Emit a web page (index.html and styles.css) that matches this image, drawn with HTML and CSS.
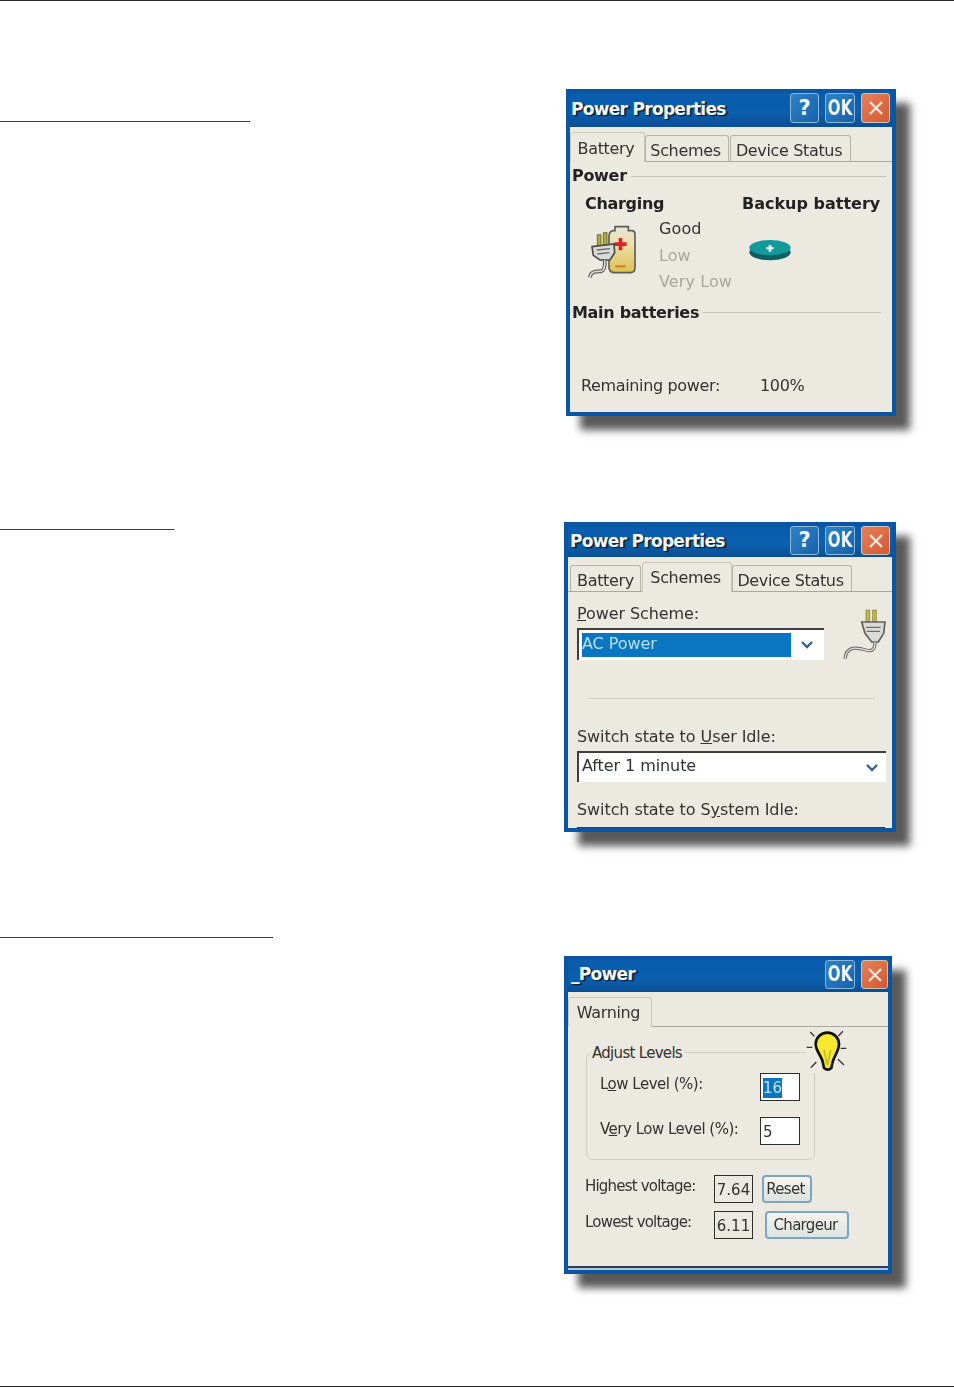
FILE: index.html
```html
<!DOCTYPE html>
<html lang="en">
<head>
<meta charset="utf-8">
<title>Power Properties</title>
<link rel="stylesheet" href="styles.css">
</head>
<body>
<div class="page">
  <section class="section s1">
    <div class="rule r1"></div>
    <div class="dialog d1">
      <div class="titlebar tall">
        <span class="title">Power Properties</span>
        <span class="btn">?</span><span class="btn wide"><span class="ok">OK</span></span><span class="btn close"><svg viewBox="0 0 20 20" width="20" height="20"><path d="M4 4L16 16M16 4L4 16" stroke="#f6e4da" stroke-width="2.4" fill="none"/></svg></span>
      </div>
      <div class="tabs tabs1">
        <span class="tab active t-battery">Battery</span>
        <span class="tab t-schemes">Schemes</span>
        <span class="tab t-device">Device Status</span>
      </div>
      <div class="panel p1">
        <div class="heading h-power">Power</div>
        <div class="charging">
          <div class="col-left">
            <div class="subhead">Charging</div>
            <div class="status">
              <svg class="ico" width="60" height="70" viewBox="0 0 180 210">
                <defs><linearGradient id="bat" x1="0" y1="0" x2="0" y2="1"><stop offset="0" stop-color="#e8e6dc"/><stop offset=".4" stop-color="#ecdfa6"/><stop offset="1" stop-color="#dcc050"/></linearGradient></defs>
                <path d="M105 32h40v12h12q8 2 8 12v100q0 12-12 14h-52q-12-2-14-14V58q2-12 12-14h6z" fill="url(#bat)" stroke="#5f5f54" stroke-width="5"/>
                <path d="M116 66h11v13h13v11h-13v13h-11V90h-13V79h13z" fill="#d8242a"/>
                <rect x="106" y="148" width="30" height="6" fill="#d67a20"/>
                <path d="M52 56h11v36H52zM70 50h11v38H70z" fill="#b4ad3c" stroke="#5f5d26" stroke-width="2.5"/>
                <path d="M36 92l66-8 2 26-14 22H60L40 118z" fill="#d9dbd7" stroke="#4a4b45" stroke-width="5"/>
                <path d="M50 102l40-4M52 114l36-4" stroke="#6a6b64" stroke-width="4"/>
                <path d="M74 132c2 20 0 32-12 34-12 1-30-2-32 18" fill="none" stroke="#4a4b45" stroke-width="11"/>
                <path d="M74 132c2 20 0 32-12 34-12 1-30-2-32 18" fill="none" stroke="#dcdcd6" stroke-width="5"/>
              </svg>
              <div class="levels">
                <div class="level">Good</div>
                <div class="level off">Low</div>
                <div class="level off">Very Low</div>
              </div>
            </div>
          </div>
          <div class="col-right">
            <div class="subhead flush">Backup battery</div>
            <svg class="coin" width="60" height="40" viewBox="0 0 180 120">
              <ellipse cx="90" cy="64" rx="62" ry="24" fill="#0c5f62"/>
              <ellipse cx="90" cy="50" rx="62" ry="23" fill="#129a9b"/>
              <path d="M86 42h8v6h7v7h-7v7h-8v-7h-7v-7h7z" fill="#e8f4f0"/>
            </svg>
          </div>
        </div>
        <div class="heading h-main">Main batteries</div>
        <div class="remaining"><span class="rem-label">Remaining power:</span><span>100%</span></div>
      </div>
    </div>
  </section>

  <section class="section s2">
    <div class="rule r2"></div>
    <div class="dialog d2">
      <div class="titlebar">
        <span class="title">Power Properties</span>
        <span class="btn">?</span><span class="btn wide"><span class="ok">OK</span></span><span class="btn close"><svg viewBox="0 0 20 20" width="20" height="20"><path d="M4 4L16 16M16 4L4 16" stroke="#f6e4da" stroke-width="2.4" fill="none"/></svg></span>
      </div>
      <div class="tabs">
        <span class="tab t2-battery">Battery</span>
        <span class="tab active t2-schemes">Schemes</span>
        <span class="tab t2-device">Device Status</span>
      </div>
      <div class="panel p2">
        <div class="scheme-row">
          <div class="scheme-left">
            <div class="field-label"><u>P</u>ower Scheme:</div>
            <div class="combo combo-a">
              <span class="selected">AC Power</span>
              <svg class="chev" width="14" height="10" viewBox="0 0 14 10"><path d="M2 2l5 5 5-5" fill="none" stroke="#33628f" stroke-width="2.4"/></svg>
            </div>
          </div>
          <svg class="plug" width="60" height="65" viewBox="0 0 180 195">
            <path d="M108 30h11v36h-11zM128 30h11v36h-11z" fill="#c2bb48" stroke="#77752f" stroke-width="2"/>
            <path d="M95 66h70l-4 34-16 26h-20l-20-26z" fill="#dadcd8" stroke="#5f605b" stroke-width="5"/>
            <path d="M108 82h44M110 94h40" stroke="#6f6f6a" stroke-width="4"/>
            <path d="M135 126c0 22-8 30-28 24-24-8-58-14-62 26" fill="none" stroke="#666762" stroke-width="10"/>
            <path d="M135 126c0 22-8 30-28 24-24-8-58-14-62 26" fill="none" stroke="#e6e6e0" stroke-width="4"/>
          </svg>
        </div>
        <div class="separator"></div>
        <div class="field-label l-user">Switch state to <u>U</u>ser Idle:</div>
        <div class="combo combo-b">
          <span class="combo-text">After 1 minute</span>
          <svg class="chev" width="14" height="10" viewBox="0 0 14 10"><path d="M2 2l5 5 5-5" fill="none" stroke="#33628f" stroke-width="2.4"/></svg>
        </div>
        <div class="field-label l-system">Switch state to S<u>y</u>stem Idle:</div>
        <div class="cut-combo"></div>
      </div>
    </div>
  </section>

  <section class="section s3">
    <div class="rule r3"></div>
    <div class="dialog d3">
      <div class="titlebar short">
        <span class="title">_Power</span>
        <span class="btn wide"><span class="ok">OK</span></span><span class="btn close narrow"><svg viewBox="0 0 20 20" width="20" height="20"><path d="M4 4L16 16M16 4L4 16" stroke="#f6e4da" stroke-width="2.4" fill="none"/></svg></span>
      </div>
      <div class="tabs tabs3">
        <span class="tab active t3-warning">Warning</span>
      </div>
      <div class="panel p3">
        <div class="group">
          <span class="legend">Adjust Levels</span>
          <svg class="bulb" width="60" height="60" viewBox="0 0 180 180">
            <rect x="18" y="24" width="132" height="134" fill="#ece9e1"/>
            <path d="M47 72a35 34 0 1 1 70 0c0 22-16 36-20 58l-3 14q-10 10-22 0l-3-14c-3-22-22-36-22-58z" fill="#f6ea2e" stroke="#111" stroke-width="8"/>
            <path d="M72 90l10 46 10-46" fill="none" stroke="#c6b82c" stroke-width="5"/>
            <path d="M31 36l12 13M129 34l-14 14M20 82h17M122 85h17M32 143l17-17M114 118l18 17" stroke="#333" stroke-width="4"/>
          </svg>
          <div class="grow-row">
            <span class="grow-label"><span>L<u>o</u>w Level (%):</span></span>
            <span class="input"><span class="sel">16</span></span>
          </div>
          <div class="grow-row second">
            <span class="grow-label lower"><span>V<u>e</u>ry Low Level (%):</span></span>
            <span class="input">5</span>
          </div>
        </div>
        <div class="volt-row first">
          <span class="volt-label">Highest voltage:</span>
          <span class="value">7.64</span>
          <span class="push push-a">Reset</span>
        </div>
        <div class="volt-row">
          <span class="volt-label">Lowest voltage:</span>
          <span class="value">6.11</span>
          <span class="push push-b">Chargeur</span>
        </div>
      </div>
      <div class="status-bar"></div>
    </div>
  </section>
  <div class="foot"></div>
</div>
</body>
</html>
```

FILE: styles.css
```css
* { box-sizing: border-box; }
html, body { margin: 0; padding: 0; background: #fff; }
body { font-family: "DejaVu Sans", sans-serif; color: #33332f; }
.page { height: 1388px; display: flex; flex-direction: column; border-top: 1px solid #2a2a2a; overflow: hidden; }
.foot { margin-top: auto; height: 1px; background: #2a2a2a; margin-bottom: 1px; }

.section { display: flex; justify-content: space-between; align-items: flex-start; }
.s1 { margin-top: 88px; padding-right: 58px; }
.s2 { margin-top: 106px; padding-right: 58px; }
.s3 { margin-top: 105px; padding-right: 62px; }

.rule { height: 1px; background: #3a3a3a; }
.r1 { width: 250px; margin-top: 32px; }
.r2 { width: 174px; margin-top: 7px; }
.r3 { width: 273px; }

.dialog { display: flex; flex-direction: column; background: #ece9e1; border: 4px solid #0a56a2; box-shadow: 14px 14px 8px #5a5a5a; filter: blur(.35px); overflow: hidden; font-size: 16px; letter-spacing: -.35px; }
.d1 { width: 330px; height: 327px; }
.d2 { width: 332px; height: 310px; }
.d3 { width: 328px; height: 318px; margin-top: 19px; }

.titlebar { flex: none; display: flex; align-items: flex-start; gap: 6px; height: 31px; padding: 0 2px 0 0; background: linear-gradient(#0a5cae, #0b5fad 60%, #0a4e94); color: #fff; }
.titlebar.tall { height: 34px; }
.titlebar.short { height: 32px; padding-right: 0; }
.title { flex: 1; padding-left: 2px; font-size: 17px; font-weight: bold; line-height: 30px; letter-spacing: -.7px; color: #f4f8fb; text-shadow: 1px 1px 1px #10243c, 2px 1px 1px #10243c; white-space: nowrap; }
.tall .title { padding-left: 1px; line-height: 32px; }
.short .title { padding-left: 3px; line-height: 29px; }
.btn { width: 29px; height: 29px; display: flex; align-items: center; justify-content: center; font-size: 21px; font-weight: bold; line-height: 1; letter-spacing: 0; color: #eef5fa; background: linear-gradient(135deg, #2f82c6, #1562ad); border: 1px solid #8db8da; border-radius: 3px; }
.btn.wide { width: 30px; }
.btn.close { background: linear-gradient(135deg, #e8805a, #d15a30); border-color: #cfc4b8; }
.btn.narrow { width: 27px; }
.tall .btn { height: 30px; }
.ok { display: inline-block; transform: scaleX(.72); }

.tabs { flex: none; display: flex; align-items: flex-end; height: 35px; padding-left: 2px; border-bottom: 1px solid #a9a79c; }
.tabs1 { padding-left: 0; }
.tabs3 { padding-left: 0; }
.tab { height: 26px; padding-right: 3px; line-height: 29px; text-align: center; border: 1px solid #b5b3a8; border-bottom: 0; border-radius: 3px 3px 0 0; white-space: nowrap; }
.tab.active { height: 30px; line-height: 29px; border-color: #c9c7bc; margin-bottom: -1px; background: #ece9e1; }
.tab.t-battery { width: 75px; line-height: 31px; }
.t-schemes { width: 84px; }
.t-device { width: 121px; margin-left: 1px; }
.t2-battery { width: 71px; padding-right: 0; }
.t2-schemes { width: 90px; margin-left: 1px; }
.t2-device { width: 120px; }
.t3-warning { width: 84px; }

.panel { flex: 1; min-height: 0; }
.p1 { padding: 4px 6px 0 2px; }
.heading { display: flex; align-items: center; gap: 4px; height: 20px; line-height: 20px; font-weight: bold; font-size: 16px; letter-spacing: -.3px; color: #222; }
.heading::after { content: ""; flex: 1; height: 1px; background: #c4c2b6; }
.charging { display: grid; grid-template-columns: 170px 1fr; margin-top: 8px; }
.subhead { height: 20px; line-height: 20px; font-weight: bold; padding-left: 13px; letter-spacing: -.3px; color: #222; white-space: nowrap; }
.subhead.flush { padding-left: 0; letter-spacing: 0; }
.status { display: flex; margin: 2px 0 0 8px; }
.ico { flex: none; }
.levels { padding-left: 19px; letter-spacing: .1px; }
.level { height: 26.5px; line-height: 26px; white-space: nowrap; }
.level.off { color: #a8a89e; }
.coin { display: block; margin: 17px 0 0 -2px; }
.h-main { margin-top: 7px; padding-right: 5px; }
.remaining { display: flex; margin: 53px 0 0 9px; line-height: 20px; height: 20px; }
.rem-label { width: 179px; }

.p2 { padding-top: 12px; letter-spacing: -.08px; }
.scheme-row { display: flex; align-items: flex-start; padding-left: 9px; }
.scheme-left { width: 247px; }
.field-label { height: 20px; line-height: 20px; white-space: nowrap; }
.combo { display: flex; align-items: center; background: #fff; border-top: 2px solid #3e3e3a; border-left: 2px solid #3e3e3a; }
.combo-a { height: 32px; margin-top: 4px; padding: 2px 0 2px 3px; }
.selected { flex: none; width: 209px; height: 24px; line-height: 21px; background: #0a76c2; color: #b9e0f4; }
.chev { flex: none; margin-left: 9px; }
.plug { flex: none; margin: -4px 0 0 6px; }
.separator { height: 1px; width: 287px; margin: 33px 0 0 20px; background: #cfcdc2; }
.l-user { margin: 28px 0 0 9px; }
.combo-b { width: 309px; height: 31px; margin: 4px 0 0 9px; padding-left: 3px; }
.combo-text { flex: 1; padding-bottom: 4px; }
.combo-b .chev { margin: 0 7px 0 0; }
.l-system { margin: 18px 0 0 9px; }
.cut-combo { height: 2px; width: 308px; margin: 7px 0 0 9px; background: #3e3e3a; }

.p3 { padding-top: 25px; font-size: 15px; letter-spacing: -.7px; }
.group { position: relative; width: 229px; height: 108px; margin-left: 18px; padding: 20px 14px 0 13px; border: 1px solid #cfcdc2; border-radius: 6px; }
.legend { position: absolute; left: 4px; top: -10px; padding: 0 3px 0 1px; height: 20px; line-height: 20px; background: #ece9e1; }
.bulb { position: absolute; left: 213px; top: -33px; }
.grow-row { display: flex; height: 28px; }
.grow-row.second { margin-top: 16px; }
.grow-label { flex: none; width: 160px; padding-top: 1px; line-height: 20px; letter-spacing: -.5px; white-space: nowrap; }
.grow-label.lower { padding-top: 2px; }
.input { width: 40px; height: 28px; padding: 3px 0 0 2px; line-height: 22px; background: #fff; border: 1px solid #2e2e2a; font-size: 15px; letter-spacing: 0; }
.sel { display: inline-block; height: 20px; line-height: 20px; background: #0a76c2; color: #bfe2f5; }
.volt-row { display: flex; margin: 8px 0 0 17px; align-items: flex-start; }
.volt-row.first { margin-top: 15px; }
.volt-label { width: 129px; padding-top: 1px; line-height: 20px; letter-spacing: -.8px; white-space: nowrap; }
.value { width: 39px; height: 28px; line-height: 28px; text-align: center; border: 1px solid #2e2e2a; background: #ece9e1; font-size: 15px; letter-spacing: 0; }
.push { height: 28px; padding-right: 3px; line-height: 25px; text-align: center; border: 2px solid #7aa6c4; border-radius: 4px; background: linear-gradient(#f5f4ef, #dfe2e0); }
.push-a { width: 50px; margin-left: 9px; }
.push-b { width: 84px; margin-left: 12px; }
.status-bar { flex: none; height: 4px; background: #b4c6dc; border-top: 2px solid #2f3c52; }
```
